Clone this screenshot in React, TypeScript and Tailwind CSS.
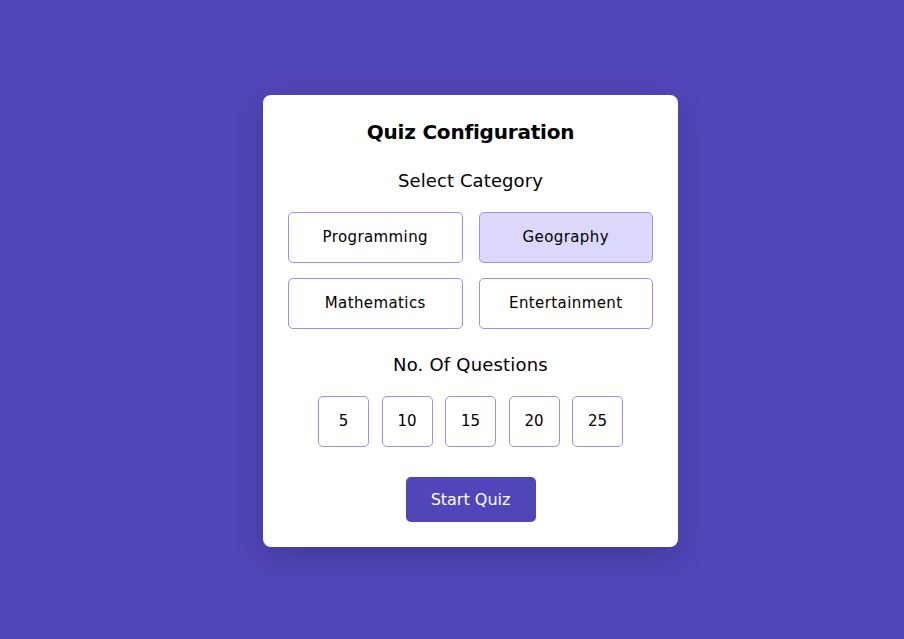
import React, { useState } from "react";

const cats = ["Programming", "Geography", "Mathematics", "Entertainment"];
const nums = [5, 10, 15, 20, 25];

export default function App() {
  const [cat, setCat] = useState("Geography");
  const [num, setNum] = useState<number | null>(null);
  return (
    <div
      className="w-full h-[639px] bg-[#5046b9] flex items-start justify-center pt-[95px] pl-[37px]"
      style={{ fontFamily: '"DejaVu Sans", sans-serif' }}
    >
      <div className="w-[415px] h-[452px] bg-white rounded-[8px] shadow-[0_10px_30px_rgba(0,0,0,0.18)] px-[25px] pt-[23px] flex flex-col items-center">
        <h2 className="text-[20px] font-bold text-black leading-[28px] tracking-[-0.2px]">Quiz Configuration</h2>
        <h3 className="mt-[23px] text-[18px] text-black leading-[24px] tracking-[0.1px]">Select Category</h3>
        <div className="mt-[19px] grid grid-cols-2 gap-x-[16px] gap-y-[15px] w-full">
          {cats.map((c) => (
            <button
              key={c}
              onClick={() => setCat(c)}
              className={`h-[51px] rounded-[5px] border border-[#9d8ff8] text-[15px] tracking-[0.4px] text-black ${
                cat === c ? "bg-[#dcd8fc]" : "bg-white"
              }`}
            >
              {c}
            </button>
          ))}
        </div>
        <h3 className="mt-[24px] text-[18px] text-black leading-[24px] tracking-[0.2px]">No. Of Questions</h3>
        <div className="mt-[19px] flex gap-[12.5px]">
          {nums.map((n) => (
            <button
              key={n}
              onClick={() => setNum(n)}
              className={`w-[51px] h-[51px] rounded-[5px] border border-[#9d8ff8] text-[15px] text-black ${
                num === n ? "bg-[#dcd8fc]" : "bg-white"
              }`}
            >
              {n}
            </button>
          ))}
        </div>
        <button className="mt-[30px] w-[130px] h-[45px] rounded-[5px] bg-[#5046b9] text-white text-[16px]">
          Start Quiz
        </button>
      </div>
    </div>
  );
}
